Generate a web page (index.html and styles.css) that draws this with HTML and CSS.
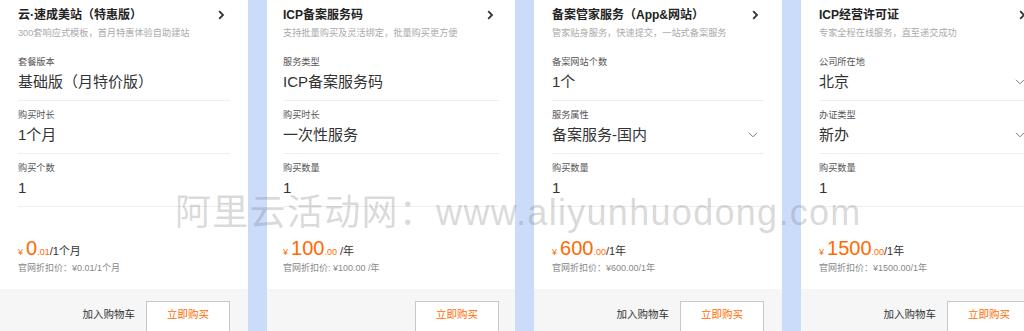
FILE: index.html
```html
<!DOCTYPE html>
<html lang="zh-CN">
<head>
<meta charset="utf-8">
<title>产品卡片</title>
<link rel="stylesheet" href="styles.css">
</head>
<body>
<div class="page">
  <div class="cards">
    <div class="card">
      <div class="head">
        <div class="title-row"><span class="title">云·速成美站（特惠版）</span><svg class="go" viewBox="0 0 7 10" width="7" height="10"><path d="M1.2 1.2 L5 5 L1.2 8.8" fill="none" stroke="#333" stroke-width="1.8"/></svg></div>
        <div class="sub">300套响应式模板，首月特惠体验自助建站</div>
      </div>
      <div class="field"><div class="label">套餐版本</div><div class="value">基础版（月特价版）</div></div>
      <div class="field"><div class="label">购买时长</div><div class="value">1个月</div></div>
      <div class="field"><div class="label">购买个数</div><div class="value">1</div></div>
      <div class="price-box">
        <div class="price"><span class="cur">¥</span><span class="int">0</span><span class="dec">.01</span><span class="unit">/1个月</span></div>
        <div class="orig">官网折扣价：¥0.01/1个月</div>
      </div>
      <div class="foot"><span class="cart">加入购物车</span><span class="buy">立即购买</span></div>
    </div>

    <div class="card card-alt">
      <div class="head">
        <div class="title-row"><span class="title">ICP备案服务码</span><svg class="go" viewBox="0 0 7 10" width="7" height="10"><path d="M1.2 1.2 L5 5 L1.2 8.8" fill="none" stroke="#333" stroke-width="1.8"/></svg></div>
        <div class="sub">支持批量购买及灵活绑定，批量购买更方便</div>
      </div>
      <div class="field"><div class="label">服务类型</div><div class="value">ICP备案服务码</div></div>
      <div class="field"><div class="label">购买时长</div><div class="value">一次性服务</div></div>
      <div class="field"><div class="label">购买数量</div><div class="value">1</div></div>
      <div class="price-box">
        <div class="price"><span class="cur">¥</span><span class="int">100</span><span class="dec">.00</span><span class="unit">&nbsp;/年</span></div>
        <div class="orig">官网折扣价: ¥100.00 /年</div>
      </div>
      <div class="foot"><span class="buy">立即购买</span></div>
    </div>

    <div class="card">
      <div class="head">
        <div class="title-row"><span class="title">备案管家服务（App&amp;网站）</span><svg class="go" viewBox="0 0 7 10" width="7" height="10"><path d="M1.2 1.2 L5 5 L1.2 8.8" fill="none" stroke="#333" stroke-width="1.8"/></svg></div>
        <div class="sub">管家贴身服务，快速提交，一站式备案服务</div>
      </div>
      <div class="field"><div class="label">备案网站个数</div><div class="value">1个</div></div>
      <div class="field"><div class="label">服务属性</div><div class="value select"><span>备案服务-国内</span><svg class="down" viewBox="0 0 10 6" width="10" height="6"><path d="M1 0.8 L5 4.8 L9 0.8" fill="none" stroke="#777" stroke-width="1"/></svg></div></div>
      <div class="field"><div class="label">购买数量</div><div class="value">1</div></div>
      <div class="price-box">
        <div class="price"><span class="cur">¥</span><span class="int">600</span><span class="dec">.00</span><span class="unit">/1年</span></div>
        <div class="orig">官网折扣价：¥600.00/1年</div>
      </div>
      <div class="foot"><span class="cart">加入购物车</span><span class="buy">立即购买</span></div>
    </div>

    <div class="card">
      <div class="head">
        <div class="title-row"><span class="title">ICP经营许可证</span><svg class="go" viewBox="0 0 7 10" width="7" height="10"><path d="M1.2 1.2 L5 5 L1.2 8.8" fill="none" stroke="#333" stroke-width="1.8"/></svg></div>
        <div class="sub">专家全程在线服务，直至递交成功</div>
      </div>
      <div class="field"><div class="label">公司所在地</div><div class="value select"><span>北京</span><svg class="down" viewBox="0 0 10 6" width="10" height="6"><path d="M1 0.8 L5 4.8 L9 0.8" fill="none" stroke="#777" stroke-width="1"/></svg></div></div>
      <div class="field"><div class="label">办证类型</div><div class="value select"><span>新办</span><svg class="down" viewBox="0 0 10 6" width="10" height="6"><path d="M1 0.8 L5 4.8 L9 0.8" fill="none" stroke="#777" stroke-width="1"/></svg></div></div>
      <div class="field"><div class="label">购买数量</div><div class="value">1</div></div>
      <div class="price-box">
        <div class="price"><span class="cur">¥</span><span class="int">1500</span><span class="dec">.00</span><span class="unit">/1年</span></div>
        <div class="orig">官网折扣价：¥1500.00/1年</div>
      </div>
      <div class="foot"><span class="cart">加入购物车</span><span class="buy">立即购买</span></div>
    </div>
  </div>
  <div class="watermark">阿里云活动网：www.aliyunhuodong.com</div>
</div>
</body>
</html>
```

FILE: styles.css
```css
html, body {
  margin: 0;
  padding: 0;
}
body {
  width: 1024px;
  height: 331px;
  overflow: hidden;
  background: #cbdcfa;
  font-family: "Liberation Sans", "Noto Sans CJK SC", sans-serif;
  color: #333;
}
.page {
  position: relative;
  width: 1024px;
  height: 331px;
  overflow: hidden;
}
.cards {
  display: flex;
  gap: 19px;
}
.card {
  flex: 0 0 248px;
  width: 248px;
  background: #fff;
  display: flex;
  flex-direction: column;
}
.head {
  padding: 6px 18px 0;
  height: 42px;
}
.title-row {
  display: flex;
  align-items: center;
  justify-content: space-between;
  height: 18px;
}
.title {
  font-size: 12px;
  font-weight: bold;
  color: #222;
  line-height: 18px;
  white-space: nowrap;
}
.go {
  margin-right: 5px;
  flex: none;
}
.sub {
  margin-top: 2px;
  font-size: 9.2px;
  line-height: 14px;
  color: #aaa;
  white-space: nowrap;
}
.field {
  margin: 0 18px;
  padding: 7px 0 7px;
  border-bottom: 1px solid #eeeeee;
}
.label {
  font-size: 9.2px;
  line-height: 14px;
  color: #555;
}
.value {
  margin-top: 2px;
  font-size: 15px;
  line-height: 22px;
  height: 22px;
  color: #333;
  white-space: nowrap;
}
.value.select {
  display: flex;
  align-items: center;
  justify-content: space-between;
}
.down {
  margin-right: 6px;
}
.price-box {
  padding: 29px 18px 0;
}
.price {
  display: flex;
  align-items: baseline;
  height: 24px;
  line-height: 24px;
  white-space: nowrap;
}
.cur {
  font-size: 9px;
  color: #ff6a00;
  margin-right: 3px;
}
.int {
  font-size: 20px;
  color: #ff6a00;
}
.dec {
  font-size: 9px;
  color: #ff6a00;
}
.unit {
  font-size: 11px;
  color: #333;
}
.orig {
  margin-top: 1px;
  font-size: 9px;
  line-height: 14px;
  color: #888;
  white-space: nowrap;
}
.foot {
  margin-top: 14px;
  background: #f6f6f6;
  height: 46px;
  padding: 12px 18px 0 18px;
  box-sizing: border-box;
  display: flex;
  justify-content: flex-end;
  align-items: flex-start;
  gap: 11px;
}
.cart {
  font-size: 10.5px;
  line-height: 26px;
  color: #333;
}
.buy {
  box-sizing: border-box;
  width: 84px;
  height: 31px;
  border: 1px solid #c4c8d0;
  background: #fff;
  color: #ff6a00;
  font-size: 10.5px;
  line-height: 24px;
  text-align: center;
}
.card-alt .head,
.card-alt .price-box,
.card-alt .foot {
  padding-left: 16px;
  padding-right: 16px;
}
.card-alt .field {
  margin: 0 16px;
}
.watermark {
  position: absolute;
  left: 175px;
  top: 192px;
  font-size: 36px;
  line-height: 42px;
  letter-spacing: 1.3px;
  color: rgba(110, 110, 110, 0.26);
  white-space: nowrap;
  pointer-events: none;
}
```
